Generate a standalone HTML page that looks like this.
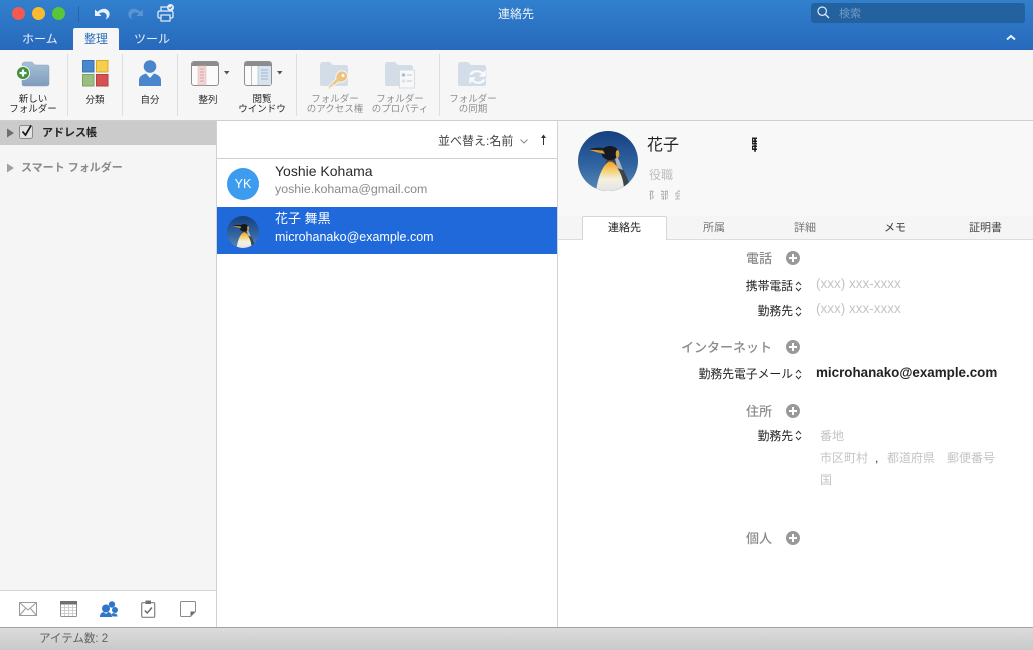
<!DOCTYPE html>
<html lang="ja"><head><meta charset="utf-8"><title>連絡先</title>
<style>
html,body{margin:0;padding:0;width:1033px;height:650px;overflow:hidden;background:#fff}
body{position:relative;font-family:"Liberation Sans","Noto Sans CJK JP",sans-serif;color:#222}
.a{position:absolute}
.t{position:absolute;white-space:nowrap;line-height:14px}
.c{text-align:center}
.r{text-align:right}
.rb{position:absolute;font-size:9.5px;line-height:10px;text-align:center;white-space:nowrap;color:#2a2a2a}
.dis{color:#8f8f8f}
.sep{position:absolute;top:54px;width:1px;height:62px;background:#dedede}
svg{position:absolute;overflow:visible}
.lab{position:absolute;font-size:13px;line-height:14px;color:#8b8b8b;text-align:right;white-space:nowrap;width:120px;font-weight:500}
.sub{position:absolute;font-size:11.8px;line-height:14px;color:#222;text-align:right;white-space:nowrap;width:120px}
.ph{position:absolute;font-size:12px;line-height:14px;color:#c4c4c4;white-space:nowrap}
.tab{position:absolute;top:221px;font-size:11px;line-height:14px;white-space:nowrap;color:#555}
</style></head><body>

<svg width="0" height="0" style="position:absolute"><defs>
<linearGradient id="fold" x1="0" y1="0" x2="0" y2="1"><stop offset="0" stop-color="#a9c0d6"/><stop offset="1" stop-color="#7f9dbc"/></linearGradient>
<linearGradient id="sky" x1="0" y1="0" x2="0" y2="1"><stop offset="0" stop-color="#15407e"/><stop offset=".55" stop-color="#2f639f"/><stop offset="1" stop-color="#5a88b4"/></linearGradient>
<linearGradient id="belly" x1="0" y1="0" x2="0" y2="1"><stop offset="0" stop-color="#f2a01e"/><stop offset=".3" stop-color="#f6cf72"/><stop offset=".6" stop-color="#f4f0e2"/><stop offset="1" stop-color="#e4e4e4"/></linearGradient>
<clipPath id="cp1"><circle cx="30" cy="30" r="30"/></clipPath>
<symbol id="peng" viewBox="0 0 60 60">
<g clip-path="url(#cp1)"><rect width="60" height="60" fill="url(#sky)"/>
<path d="M30 24 C36 18 40 22 41 28 C43 36 48 42 51 52 L46 60 L20 60Z" fill="#39444f"/>
<path d="M36.500 24 C41 26 42 32 45 39 L39 37 C38 32 37 28 36.500 24Z" fill="#aab4bd"/>
<path d="M18 60 C20 46 24 36 30 31 C35 29 38 34 40 38 C44 44 46 52 46 60Z" fill="url(#belly)"/>
<ellipse cx="32" cy="22" rx="8.500" ry="7" fill="#141820"/>
<ellipse cx="39.500" cy="23" rx="1.800" ry="4" fill="#dca03a"/>
<path d="M10 18.500 L25 19.500 L27 23 L18 21Z" fill="#d99b3c"/>
<path d="M10 18.500 C14 17 20 16 26 17 L26 19.500Z" fill="#1c2026"/>
</g></symbol>
</defs></svg>

<!-- title bar -->
<div class="a" style="left:0;top:0;width:1033px;background:linear-gradient(#3180cd,#2769bc);border-bottom:1px solid #24589c;box-sizing:border-box;height:51px"></div>
<div class="a" style="left:12px;top:7px;width:13px;height:13px;border-radius:50%;background:#f25a52"></div>
<div class="a" style="left:32px;top:7px;width:13px;height:13px;border-radius:50%;background:#fbbb30"></div>
<div class="a" style="left:52px;top:7px;width:13px;height:13px;border-radius:50%;background:#5ac43a"></div>
<div class="a" style="left:78px;top:6px;width:1px;height:16px;background:#2a63a8"></div>
<svg style="left:94px;top:6px" width="17" height="15" viewBox="0 0 17 15"><path d="M1 3.500 L1 10 L7.500 10 L5.200 7.600 C7.500 5.500 11.500 6 12.600 9 C13 10.400 12.600 12 11.500 13.500 C15.200 12.200 16.600 8.500 15 5.500 C13 2 8 1.500 3.500 5.800Z" fill="#e8f0f9"/></svg>
<svg style="left:127px;top:6px" width="17" height="15" viewBox="0 0 17 15"><path d="M16 3.500 L16 10 L9.500 10 L11.800 7.600 C9.500 5.500 5.500 6 4.400 9 C4 10.400 4.400 12 5.500 13.500 C1.800 12.200 .4 8.500 2 5.500 C4 2 9 1.500 13.500 5.800Z" fill="#5b94d2"/></svg>
<svg style="left:157px;top:4px" width="18" height="18" viewBox="0 0 18 18"><path d="M4 7 V3 H11 M13 7 V5" fill="none" stroke="#e6eef8" stroke-width="1.200"/><rect x="1" y="7" width="15" height="7" rx="1.500" fill="none" stroke="#e6eef8" stroke-width="1.300"/><rect x="4" y="11" width="9" height="6" fill="#2c75c5" stroke="#e6eef8" stroke-width="1.200"/><circle cx="13.500" cy="3.500" r="3.500" fill="#e6eef8"/><path d="M11.800 3.500l1.200 1.200 2-2.200" fill="none" stroke="#2c75c5" stroke-width="1"/></svg>
<div class="t c" style="left:466px;top:7px;width:100px;font-size:12px;color:#f0f5fb">連絡先</div>

<div class="a" style="left:811px;top:3px;width:214px;height:20px;border-radius:3px;background:#24619f"></div>
<svg style="left:817px;top:6px" width="13" height="13" viewBox="0 0 13 13"><circle cx="5.200" cy="5.200" r="4.200" fill="none" stroke="#e6eef8" stroke-width="1.200"/><path d="M8.400 8.400L12 12" stroke="#e6eef8" stroke-width="1.300"/></svg>
<div class="t" style="left:839px;top:7px;font-size:11px;color:#6f9cc9">検索</div>
<svg style="left:1006px;top:34px" width="10" height="7" viewBox="0 0 10 7"><path d="M1 5.500L5 2l4 3.500" fill="none" stroke="#e8f0f9" stroke-width="2"/></svg>

<!-- tabs -->
<div class="t" style="left:22px;top:32px;font-size:12px;color:#eaf1f9">ホーム</div>
<div class="a" style="left:73px;top:28px;width:46px;height:23px;background:#f6f6f6;border-radius:2px 2px 0 0"></div>
<div class="t c" style="left:73px;top:32px;width:46px;font-size:12px;color:#2c6fb9">整理</div>
<div class="t" style="left:134px;top:32px;font-size:12px;color:#eaf1f9">ツール</div>

<!-- ribbon -->
<div class="a" style="left:0;top:50px;width:1033px;height:70px;background:#f6f6f6"></div>
<div class="sep" style="left:67px"></div>
<div class="sep" style="left:122px"></div>
<div class="sep" style="left:177px"></div>
<div class="sep" style="left:296px"></div>
<div class="sep" style="left:439px"></div>

<svg style="left:17px;top:60px" width="33" height="28" viewBox="0 0 33 28"><path d="M5 5 Q5 2 8 2 H15 L18 5 H30 Q32 5 32 7 V24 Q32 26 30 26 H7 Q5 26 5 24Z" fill="url(#fold)" stroke="#8aa3bc" stroke-width=".5"/><circle cx="6" cy="13" r="7" fill="#f2f6f0"/><circle cx="6" cy="13" r="6" fill="#3f8f3f"/><path d="M6 9.500v7M2.500 13h7" stroke="#fff" stroke-width="2.200"/></svg>
<div class="rb" style="left:3px;top:95px;width:60px">新しい<br>フォルダー</div>

<svg style="left:82px;top:60px" width="27" height="27" viewBox="0 0 27 27"><rect x=".5" y=".5" width="11.500" height="11.500" fill="#4a88cd" stroke="#3a72b2"/><rect x="14.500" y=".5" width="11.500" height="11.500" fill="#f5cf4c" stroke="#d4aa36"/><rect x=".5" y="14.500" width="11.500" height="11.500" fill="#9bbd7f" stroke="#7ea266"/><rect x="14.500" y="14.500" width="11.500" height="11.500" fill="#d65252" stroke="#b44040"/></svg>
<div class="rb" style="left:70px;top:96px;width:50px">分類</div>

<svg style="left:139px;top:60px" width="22" height="27" viewBox="0 0 22 27"><circle cx="11" cy="6.500" r="6.300" fill="#4a86cb"/><path d="M0 26 V20 C0 16 4 14.500 7 13.500 L11 18 L15 13.500 C18 14.500 22 16 22 20 V26Z" fill="#4a86cb"/></svg>
<div class="rb" style="left:125px;top:96px;width:50px">自分</div>

<svg style="left:191px;top:61px" width="28" height="25" viewBox="0 0 28 25"><rect x=".5" y=".5" width="27" height="24" rx="2.500" fill="#fbfbfb" stroke="#8f8f8f"/><path d="M1 3 Q1 1 3 1 H25 Q27 1 27 3 V5 H1Z" fill="#8c8c8c"/><rect x="7" y="5" width="8" height="19" fill="#f2d4d3" stroke="#dcbcbc" stroke-width=".5"/><path d="M9 8h4M9 11h4M9 14h4M9 17h4M9 20h4" stroke="#d39b9b" stroke-width=".8"/></svg>
<svg style="left:224px;top:71px" width="6" height="4" viewBox="0 0 6 4"><path d="M0 0h5.500L2.750 3.500Z" fill="#555"/></svg>
<div class="rb" style="left:183px;top:96px;width:50px">整列</div>

<svg style="left:244px;top:61px" width="28" height="25" viewBox="0 0 28 25"><rect x=".5" y=".5" width="27" height="24" rx="2.500" fill="#fbfbfb" stroke="#8f8f8f"/><path d="M1 3 Q1 1 3 1 H25 Q27 1 27 3 V5 H1Z" fill="#8c8c8c"/><rect x="14" y="5" width="13" height="19" fill="#d6e3f1"/><path d="M7.500 5V24" stroke="#bbb"/><path d="M14 5V24" stroke="#a9b6c4" stroke-width=".6"/><path d="M17 9h7M17 12h7M17 15h7M17 18h7" stroke="#8fa6bd" stroke-width=".8"/></svg>
<svg style="left:277px;top:71px" width="6" height="4" viewBox="0 0 6 4"><path d="M0 0h5.500L2.750 3.500Z" fill="#555"/></svg>
<div class="rb" style="left:232px;top:95px;width:60px">閲覧<br>ウインドウ</div>

<svg style="left:320px;top:60px" width="33" height="30" viewBox="0 0 33 30"><path d="M0 5 Q0 2 3 2 H10 L13 5 H25 Q28 5 28 7 V24 Q28 26 26 26 H2 Q0 26 0 24Z" fill="#d2dde7"/><path d="M8 29 L9 26 L16 19 C15 14 19 10 23 11 C28 12 29 17 26 20 C23 23 20 22 18 22 L15 25 L13 25 L13 27 L11 27 L10 29Z" fill="#eec27f" stroke="#f6f6f6" stroke-width="1"/><circle cx="23" cy="15.500" r="1.500" fill="#fff"/></svg>
<div class="rb dis" style="left:300px;top:95px;width:70px">フォルダー<br>のアクセス権</div>

<svg style="left:385px;top:60px" width="30" height="29" viewBox="0 0 30 29"><path d="M0 5 Q0 2 3 2 H10 L13 5 H25 Q28 5 28 7 V24 Q28 26 26 26 H2 Q0 26 0 24Z" fill="#d2dde7"/><rect x="14.500" y="10" width="15" height="18" fill="#f7f8f9" stroke="#d6dde3"/><circle cx="18.500" cy="15" r="1.800" fill="#a7c3df"/><circle cx="18.500" cy="21" r="1.800" fill="#e2e2e2"/><path d="M22 15h5M22 21h5" stroke="#c6c6c6"/></svg>
<div class="rb dis" style="left:365px;top:95px;width:70px">フォルダー<br>のプロパティ</div>

<svg style="left:458px;top:60px" width="32" height="29" viewBox="0 0 32 29"><path d="M0 5 Q0 2 3 2 H10 L13 5 H25 Q28 5 28 7 V24 Q28 26 26 26 H2 Q0 26 0 24Z" fill="#d2dde7"/><path d="M11 15 C12 10 20 8 25 12 L28 9 V17 H20 L23 14 C20 12 16 12 14.500 15Z" fill="#f8f9fa" stroke="#d3dbe2" stroke-width=".6"/><path d="M28 19 C27 24 19 26 14 22 L11 25 V17 H19 L16 20 C19 22 23 22 24.500 19Z" fill="#f8f9fa" stroke="#d3dbe2" stroke-width=".6"/></svg>
<div class="rb dis" style="left:438px;top:95px;width:70px">フォルダー<br>の同期</div>

<div class="a" style="left:0;top:120px;width:1033px;height:1px;background:#cfcfcf"></div>

<!-- sidebar -->
<div class="a" style="left:0;top:121px;width:216px;height:506px;background:#f5f5f5"></div>
<div class="a" style="left:0;top:121px;width:216px;height:24px;background:#cbcbcb"></div>
<div class="a" style="left:216px;top:121px;width:1px;height:506px;background:#d2d2d2"></div>
<svg style="left:7px;top:128px" width="8" height="10" viewBox="0 0 8 10"><path d="M0 0.500L7 5 0 9.500Z" fill="#6e6e6e"/></svg>
<div class="a" style="left:19px;top:125px;width:12px;height:12px;border:1px solid #8a8a8a;border-radius:2.500px;background:#e2e2e2"></div>
<svg style="left:21px;top:124px" width="12" height="13" viewBox="0 0 12 13"><path d="M1.500 7.500L4.500 11 10 1.500" fill="none" stroke="#111" stroke-width="1.700"/></svg>
<div class="t" style="left:42px;top:126px;font-size:11px;font-weight:700;color:#222">アドレス帳</div>
<svg style="left:7px;top:163px" width="8" height="10" viewBox="0 0 8 10"><path d="M0 0.500L7 5 0 9.500Z" fill="#a0a0a0"/></svg>
<div class="t" style="left:21px;top:161px;font-size:11px;font-weight:700;color:#8a8a8a">スマート フォルダー</div>

<div class="a" style="left:0;top:590px;width:216px;height:37px;background:#fff;border-top:1px solid #d4d4d4;box-sizing:border-box"></div>
<svg style="left:19px;top:602px" width="18" height="14" viewBox="0 0 18 14"><rect x=".5" y=".5" width="17" height="13" fill="#fdfdfd" stroke="#9a9a9a"/><path d="M.5 .5L9 8 17.500 .5M.5 13.500L6.500 6.500M17.500 13.500L11.500 6.500" fill="none" stroke="#9a9a9a"/></svg>
<svg style="left:60px;top:601px" width="17" height="16" viewBox="0 0 17 16"><rect x=".5" y=".5" width="16" height="15" rx="1" fill="#fff" stroke="#8f8f8f"/><rect x="0" y="0" width="17" height="3.500" fill="#707070"/><path d="M4.500 4V15M8.500 4V15M12.500 4V15M1 6.500H16M1 9.500H16M1 12.500H16" stroke="#c5c5c5" stroke-width=".8"/></svg>
<svg style="left:100px;top:601px" width="18" height="17" viewBox="0 0 18 17"><circle cx="12" cy="3.500" r="3.200" fill="#2f76c8"/><circle cx="15" cy="9" r="3" fill="#2f76c8"/><circle cx="6" cy="7.500" r="4" fill="#2f76c8"/><path d="M0 16 C0 13 1.500 11.500 3.500 11 L6 13 L8.500 11 C10.500 11.500 12 13 12 16Z" fill="#2f76c8"/><path d="M11.500 13 Q13 11.500 15 12.500 Q17.500 13 17.500 15.500 H12.500Z" fill="#2f76c8"/></svg>
<svg style="left:141px;top:600px" width="15" height="18" viewBox="0 0 15 18"><rect x=".7" y="2.700" width="13" height="14.600" rx="1" fill="#fff" stroke="#808080" stroke-width="1.200"/><rect x="4.500" y=".5" width="5.500" height="3.500" fill="#707070"/><path d="M3.800 10.500L6.200 13 11 7.500" fill="none" stroke="#666" stroke-width="1.400"/></svg>
<svg style="left:180px;top:601px" width="16" height="16" viewBox="0 0 16 16"><path d="M1.500 .5H14.500Q15.500 .5 15.500 1.500V10.500L10.500 15.500H1.500Q.5 15.500 .5 14.500V1.500Q.5 .5 1.500 .5Z" fill="#fff" stroke="#8a8a8a"/><path d="M15 10.500H10.500V15.200Z" fill="#6a6a6a"/></svg>

<!-- status bar -->
<div class="a" style="left:0;top:627px;width:1033px;height:23px;background:linear-gradient(#dcdcdc,#c9c9c9);border-top:1px solid #a2a2a2;box-sizing:border-box"></div>
<div class="t" style="left:39px;top:632px;font-size:11.500px;color:#606060">アイテム数: 2</div>

<!-- list -->
<div class="t" style="left:438px;top:134px;font-size:12px;color:#444">並べ替え:名前</div>
<svg style="left:520px;top:139px" width="8" height="5" viewBox="0 0 8 5"><path d="M.5 .5L4 4 7.500 .5" fill="none" stroke="#888"/></svg>
<svg style="left:540px;top:134px" width="7" height="12" viewBox="0 0 7 12"><path d="M3.500 1V11" stroke="#333" stroke-width="1"/><path d="M1 4L3.500 .5 6 4Z" fill="#333"/></svg>
<div class="a" style="left:217px;top:158px;width:340px;height:1px;background:#d0d0d0"></div>
<div class="a" style="left:227px;top:168px;width:32px;height:32px;border-radius:50%;background:#3e9cf0;color:#fff;font-size:12.500px;line-height:32px;text-align:center">YK</div>
<div class="t" style="left:275px;top:164px;font-size:14px;color:#2b2b2b">Yoshie Kohama</div>
<div class="t" style="left:275px;top:182px;font-size:12.400px;color:#8a8a8a">yoshie.kohama@gmail.com</div>
<div class="a" style="left:217px;top:207px;width:340px;height:47px;background:#1f69da"></div>
<svg style="left:227px;top:216px" width="32" height="32" viewBox="0 0 60 60"><use href="#peng"/></svg>
<div class="t" style="left:275px;top:212px;font-size:13px;color:#fff">花子 舞黒</div>
<div class="t" style="left:275px;top:230px;font-size:12.500px;color:#fff">microhanako@example.com</div>
<div class="a" style="left:557px;top:121px;width:1px;height:506px;background:#d2d2d2"></div>

<!-- detail -->
<div class="a" style="left:558px;top:121px;width:475px;height:95px;background:#f8f8f8"></div>
<div class="a" style="left:558px;top:216px;width:475px;height:24px;background:#f5f5f5;border-bottom:1px solid #dcdcdc;box-sizing:border-box"></div>
<svg style="left:578px;top:131px" width="60" height="60" viewBox="0 0 60 60"><use href="#peng"/></svg>
<div class="t" style="left:647px;top:137px;font-size:16px;line-height:18px;color:#222">花子</div>
<div class="a" style="left:752px;top:137px;width:5px;height:18px;overflow:hidden"><div class="t" style="left:-9px;top:0;font-size:16px;line-height:18px;font-weight:700;color:#222">舞黒</div></div>
<div class="t" style="left:649px;top:168px;font-size:12px;color:#bdbdbd">役職</div>
<div class="a" style="left:649px;top:190px;width:5px;height:13px;overflow:hidden"><div class="t" style="left:-5px;top:0;font-size:10px;color:#9a9a9a">部署</div></div>
<div class="a" style="left:661px;top:190px;width:7px;height:13px;overflow:hidden"><div class="t" style="left:-2px;top:0;font-size:10px;color:#9a9a9a">部署</div></div>
<div class="a" style="left:675px;top:190px;width:5px;height:13px;overflow:hidden"><div class="t" style="left:-1px;top:0;font-size:10px;color:#aaa">会社</div></div>

<div class="a" style="left:582px;top:216px;width:85px;height:24px;background:#fff;border:1px solid #d6d6d6;border-bottom:none;border-radius:2px 2px 0 0;box-sizing:border-box"></div>
<div class="tab" style="left:608px;color:#222">連絡先</div>
<div class="tab" style="left:703px;color:#777">所属</div>
<div class="tab" style="left:794px;color:#777">詳細</div>
<div class="tab" style="left:884px;color:#333">メモ</div>
<div class="tab" style="left:969px;color:#444">証明書</div>

<div class="lab" style="left:652px;top:252px">電話</div>
<div class="lab" style="left:652px;top:341px">インターネット</div>
<div class="lab" style="left:652px;top:405px">住所</div>
<div class="lab" style="left:652px;top:532px">個人</div>

<svg style="left:786px;top:251px" width="14" height="14" viewBox="0 0 14 14"><circle cx="7" cy="7" r="7" fill="#999"/><path d="M7 3v8M3 7h8" stroke="#fff" stroke-width="2"/></svg>
<svg style="left:786px;top:340px" width="14" height="14" viewBox="0 0 14 14"><circle cx="7" cy="7" r="7" fill="#999"/><path d="M7 3v8M3 7h8" stroke="#fff" stroke-width="2"/></svg>
<svg style="left:786px;top:404px" width="14" height="14" viewBox="0 0 14 14"><circle cx="7" cy="7" r="7" fill="#999"/><path d="M7 3v8M3 7h8" stroke="#fff" stroke-width="2"/></svg>
<svg style="left:786px;top:531px" width="14" height="14" viewBox="0 0 14 14"><circle cx="7" cy="7" r="7" fill="#999"/><path d="M7 3v8M3 7h8" stroke="#fff" stroke-width="2"/></svg>

<div class="sub" style="left:673px;top:279px">携帯電話</div>
<div class="sub" style="left:673px;top:304px">勤務先</div>
<div class="sub" style="left:673px;top:367px">勤務先電子メール</div>
<div class="sub" style="left:673px;top:429px">勤務先</div>

<svg style="left:795px;top:281px" width="7" height="11" viewBox="0 0 7 11"><path d="M1 4L3.500 1.200 6 4M1 7L3.500 9.800 6 7" fill="none" stroke="#333" stroke-width="1"/></svg>
<svg style="left:795px;top:306px" width="7" height="11" viewBox="0 0 7 11"><path d="M1 4L3.500 1.200 6 4M1 7L3.500 9.800 6 7" fill="none" stroke="#333" stroke-width="1"/></svg>
<svg style="left:795px;top:369px" width="7" height="11" viewBox="0 0 7 11"><path d="M1 4L3.500 1.200 6 4M1 7L3.500 9.800 6 7" fill="none" stroke="#333" stroke-width="1"/></svg>
<svg style="left:795px;top:430px" width="7" height="11" viewBox="0 0 7 11"><path d="M1 4L3.500 1.200 6 4M1 7L3.500 9.800 6 7" fill="none" stroke="#333" stroke-width="1"/></svg>

<div class="ph" style="left:816px;top:277px;font-size:13.500px">(xxx) xxx-xxxx</div>
<div class="ph" style="left:816px;top:302px;font-size:13.500px">(xxx) xxx-xxxx</div>
<div class="t" style="left:816px;top:366px;font-size:13.400px;font-weight:700;color:#222">microhanako@example.com</div>
<div class="ph" style="left:820px;top:429px">番地</div>
<div class="ph" style="left:820px;top:451px">市区町村</div>
<div class="t" style="left:875px;top:451px;font-size:12px;color:#333">,</div>
<div class="ph" style="left:887px;top:451px">都道府県</div>
<div class="ph" style="left:947px;top:451px">郵便番号</div>
<div class="ph" style="left:820px;top:473px">国</div>

</body></html>
